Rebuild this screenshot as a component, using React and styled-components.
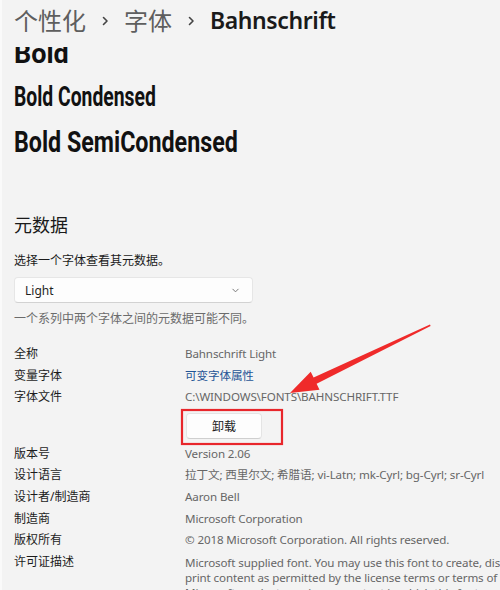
import React from "react";
import styled, { createGlobalStyle } from "styled-components";

const GlobalStyle = createGlobalStyle`
  html, body { margin: 0; padding: 0; background: #f3f3f3; }
  body {
    font-family: "Noto Sans", "Noto Sans CJK SC", sans-serif;
    color: #1b1b1b;
  }
`;

const CJK = `"Noto Sans", "Noto Sans CJK SC", sans-serif`;

const Page = styled.div`
  position: relative;
  width: 500px;
  height: 590px;
  overflow: hidden;
  background: #f3f3f3;
  box-sizing: border-box;
  border-left: 2px solid #fafafa;
`;

const Header = styled.header`
  height: 47px;
  box-sizing: border-box;
  padding: 0 0 6px 12px;
  display: flex;
  align-items: center;
  font-family: ${CJK};
  font-size: 24px;
  line-height: 1;
`;

const Crumb = styled.span`
  color: ${(p) => (p.$current ? "#1a1a1a" : "#5e5e5e")};
  font-weight: ${(p) => (p.$current ? 600 : 400)};
  font-size: ${(p) => (p.$current ? "23px" : "24px")};
  letter-spacing: ${(p) => (p.$current ? "-0.4px" : "0")};
`;

const Sep = styled.span`
  display: inline-flex;
  width: 38px;
  justify-content: center;
  color: #4a4a4a;
`;

const Viewport = styled.div`
  height: 543px;
  overflow: hidden;
`;

const Scrolled = styled.div`
  margin-top: -12px;
  width: 640px;
  padding-left: 12px;
`;

const Sample = styled.div`
  font-family: "Roboto", "DejaVu Sans", sans-serif;
  font-weight: 700;
  font-size: ${(p) => p.$size}px;
  line-height: ${(p) => p.$lh}px;
  color: #111;
  white-space: nowrap;
  span {
    display: inline-block;
    transform: scaleX(${(p) => p.$squeeze});
    transform-origin: left center;
  }
`;

const SectionTitle = styled.h2`
  margin: 49px 0 0;
  font-family: ${CJK};
  font-size: 18px;
  font-weight: 400;
  line-height: 24px;
  color: #1a1a1a;
`;

const Caption = styled.p`
  margin: ${(p) => p.$mt || 0}px 0 0;
  font-family: ${CJK};
  font-size: 12px;
  line-height: 16px;
  color: ${(p) => (p.$muted ? "#6b6b6b" : "#1a1a1a")};
`;

const Select = styled.div`
  margin-top: 8px;
  width: 239px;
  height: 26px;
  box-sizing: border-box;
  display: flex;
  align-items: center;
  justify-content: space-between;
  padding: 0 12px 0 10px;
  background: #fdfdfd;
  border: 1px solid #e6e6e6;
  border-bottom-color: #d2d2d2;
  border-radius: 4px;
  font-size: 12px;
  color: #1f1f1f;
`;

const Meta = styled.dl`
  margin: 16px 0 0;
  display: grid;
  grid-template-columns: 171px 380px;
  font-size: 12px;
  line-height: 21.6px;
`;

const Label = styled.dt`
  margin: 0;
  font-family: ${CJK};
  color: #1c1c1c;
`;

const Value = styled.dd`
  margin: 0;
  font-family: ${CJK};
  font-size: 11.6px;
  letter-spacing: -0.12px;
  color: ${(p) => (p.$link ? "#1f5596" : "#666666")};
  line-height: ${(p) => (p.$multi ? "15px" : "21.6px")};
  padding-top: ${(p) => (p.$multi ? "4px" : "0")};
`;

const ButtonCell = styled.dd`
  grid-column: 2;
  margin: 0;
  padding: 5px 0 4px;
`;

const Button = styled.button`
  display: block;
  width: 76px;
  height: 26px;
  background: #fdfdfd;
  border: 1px solid #e4e4e4;
  border-bottom-color: #cfcfcf;
  border-radius: 4px;
  font-family: ${CJK};
  font-size: 12px;
  color: #1a1a1a;
  padding: 0;
  margin-left: 1px;
`;

const Annotation = styled.svg`
  position: absolute;
  left: 0;
  top: 0;
  pointer-events: none;
`;

const Chevron = ({ size = 10, color = "#444", w = 1.6, d = "M3.5 1.5 L7 5 L3.5 8.5" }) => (
  <svg width={size} height={size} viewBox="0 0 10 10" fill="none">
    <path d={d} stroke={color} strokeWidth={w} strokeLinecap="round" strokeLinejoin="round" />
  </svg>
);

const rows = [
  ["全称", "Bahnschrift Light"],
  ["变量字体", "可变字体属性", "link"],
  ["字体文件", "C:\\WINDOWS\\FONTS\\BAHNSCHRIFT.TTF"],
  ["__button__"],
  ["版本号", "Version 2.06"],
  ["设计语言", "拉丁文; 西里尔文; 希腊语; vi-Latn; mk-Cyrl; bg-Cyrl; sr-Cyrl"],
  ["设计者/制造商", "Aaron Bell"],
  ["制造商", "Microsoft Corporation"],
  ["版权所有", "© 2018 Microsoft Corporation. All rights reserved."],
  [
    "许可证描述",
    "Microsoft supplied font. You may use this font to create, display, and print content as permitted by the license terms or terms of use, of the Microsoft product, service, or content in which this font was included. You may only (i) embed this font in content as permitted by the embedding restrictions included in this font; and (ii) temporarily download this font to a printer or other output device to help print content. Any other use is prohibited.",
    "multi",
  ],
];

export default function App() {
  return (
    <>
      <GlobalStyle />
      <Page>
        <Header>
          <Crumb>个性化</Crumb>
          <Sep><Chevron /></Sep>
          <Crumb>字体</Crumb>
          <Sep><Chevron /></Sep>
          <Crumb $current>Bahnschrift</Crumb>
        </Header>
        <Viewport>
          <Scrolled>
            <Sample $size={27} $lh={38} $squeeze={1}><span>Bold</span></Sample>
            <Sample $size={28} $lh={47} $squeeze={0.69}><span>Bold Condensed</span></Sample>
            <Sample $size={30} $lh={44} $squeeze={0.775}><span>Bold SemiCondensed</span></Sample>

            <SectionTitle>元数据</SectionTitle>
            <Caption $mt={16}>选择一个字体查看其元数据。</Caption>
            <Select>
              <span>Light</span>
              <Chevron size={9} color="#777" w={1.1} d="M2 3.5 L5 6.5 L8 3.5" />
            </Select>
            <Caption $mt={8} $muted>一个系列中两个字体之间的元数据可能不同。</Caption>

            <Meta>
              {rows.map(([label, value, kind]) =>
                label === "__button__" ? (
                  <ButtonCell key="btn">
                    <Button>卸载</Button>
                  </ButtonCell>
                ) : (
                  <React.Fragment key={label}>
                    <Label>{label}</Label>
                    <Value $link={kind === "link"} $multi={kind === "multi"}>{value}</Value>
                  </React.Fragment>
                )
              )}
            </Meta>
          </Scrolled>
        </Viewport>
        <Annotation width="500" height="590" viewBox="0 0 500 590">
          <rect x="180" y="410" width="100" height="34" fill="none" stroke="#e8262b" strokeWidth="2.2" />
          <polygon
            points="428,324.5 311.6,377.6 308.7,371.7 288,393 317.5,389.7 314.6,383.8 428.6,326"
            fill="#ef2a2a"
          />
        </Annotation>
      </Page>
    </>
  );
}
